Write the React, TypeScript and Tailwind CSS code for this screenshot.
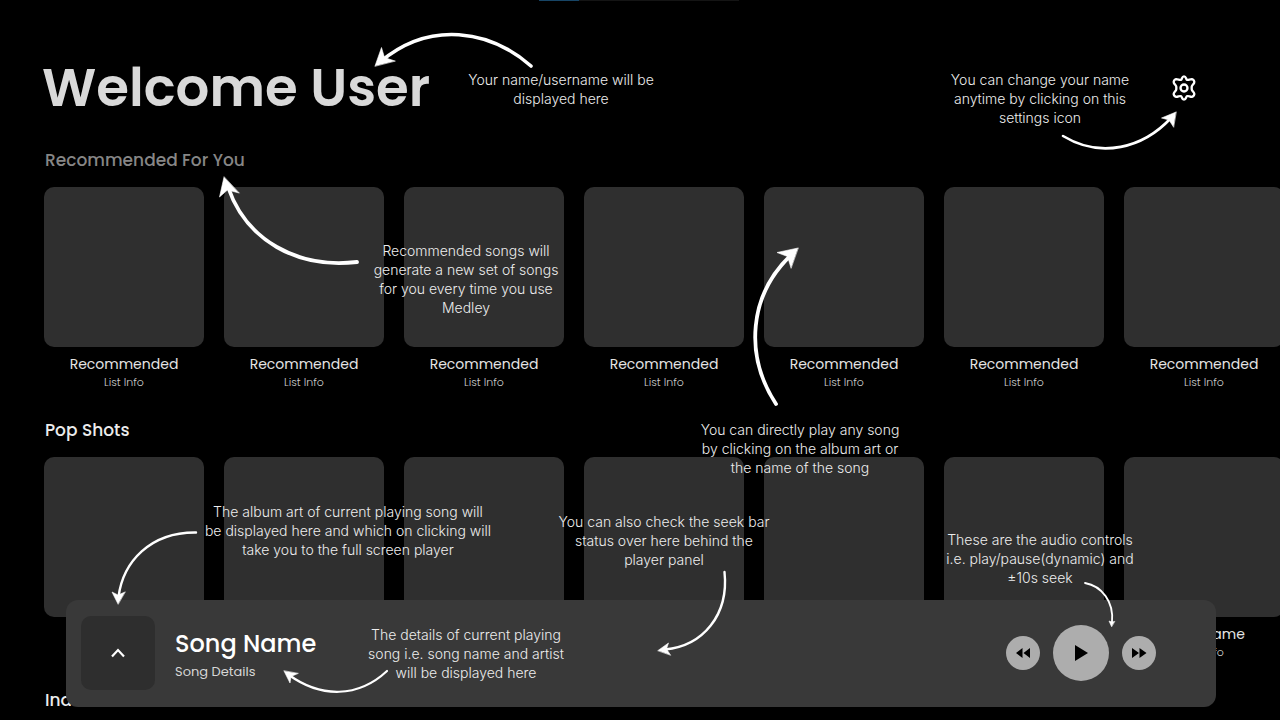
const cardSlots = [0, 1, 2, 3, 4, 5, 6];

type ShelfProps = { heading: string; muted?: boolean; title?: string };

function Shelf({ heading, muted, title }: ShelfProps) {
  return (
    <section className="flex h-[270px] flex-col">
      <h2 className={muted ? 'pl-px text-[17px] leading-7 font-medium text-[#868686]' : 'pl-px text-[17px] leading-7 font-medium text-[#ececec]'}>
        {heading}
      </h2>
      {title && (
        <ul className="mt-[13px] flex gap-5">
          {cardSlots.map((slot) => (
            <li key={slot} className="w-40 shrink-0 text-center">
              <button type="button" aria-label={title} className="block size-40 rounded-[10px] bg-[#2f2f2f]" />
              <p className="mt-[6px] text-[14px] leading-[22px] text-[#e4e4e4]">{title}</p>
              <p className="text-[11px] leading-[14px] font-light text-[#cccccc]">List Info</p>
            </li>
          ))}
        </ul>
      )}
    </section>
  );
}

const noteBase = 'absolute text-center font-[Inter,sans-serif] text-[14px] leading-[19px] font-light whitespace-nowrap text-[#ededed]';

type Note = { place: string; lines: string[] };

const notes: Note[] = [
  { place: 'left-[461px] top-[70px] w-[200px]', lines: ['Your name/username will be', 'displayed here'] },
  { place: 'left-[940px] top-[70px] w-[200px]', lines: ['You can change your name', 'anytime by clicking on this', 'settings icon'] },
  { place: 'left-[366px] top-[241px] w-[200px]', lines: ['Recommended songs will', 'generate a new set of songs', 'for you every time you use', 'Medley'] },
  { place: 'left-[695px] top-[420px] w-[210px]', lines: ['You can directly play any song', 'by clicking on the album art or', 'the name of the song'] },
  { place: 'left-[203px] top-[502px] w-[290px]', lines: ['The album art of current playing song will', 'be displayed here and which on clicking will', 'take you to the full screen player'] },
  { place: 'left-[554px] top-[512px] w-[220px]', lines: ['You can also check the seek bar', 'status over here behind the', 'player panel'] },
  { place: 'left-[940px] top-[530px] w-[200px]', lines: ['These are the audio controls', 'i.e. play/pause(dynamic) and', '±10s seek'] },
  { place: 'left-[366px] top-[625px] w-[200px]', lines: ['The details of current playing', 'song i.e. song name and artist', 'will be displayed here'] },
];

type Arrow = { curve: string; head: string; width: number };

const arrows: Arrow[] = [
  { curve: 'M531 66C490 30 430 20 380 62', head: 'M375 66L381.500 47.500L384.500 57.500L395 61Z', width: 3.6 },
  { curve: 'M1063 136C1101 159 1143 148 1171 118', head: 'M1176 112L1161.500 118L1169 120L1173.500 127Z', width: 2.6 },
  { curve: 'M357 262C297 269 246 240 228 187', head: 'M224 177L219.500 197L227.500 190L239 193Z', width: 3.8 },
  { curve: 'M776 404C744 355 749 295 791 255', head: 'M798 248L777 252.500L787.500 256.500L791 268Z', width: 3.8 },
  { curve: 'M196 532.500C150 532 123 562 118.500 597', head: 'M118 604L112 592L118 595L125 592Z', width: 2.4 },
  { curve: 'M724.500 572C729 615 703 646 665 649.500', head: 'M658 650.500L668.500 643L666.500 649L670.500 655Z', width: 2.4 },
  { curve: 'M1085 583C1102 586 1114 602 1112 622', head: 'M1111.500 626.500L1109 621L1112 622L1114.500 621.500Z', width: 1.8 },
  { curve: 'M387 671C358 698 321 698 289 675', head: 'M284 671L290 683L291 676.500L298 673.500Z', width: 2.2 },
];

function Walkthrough() {
  return (
    <div className="pointer-events-none absolute inset-0 z-20">
      <svg className="absolute top-0 left-0" width="1280" height="720" viewBox="0 0 1280 720" fill="none" aria-hidden="true">
        {arrows.map((arrow) => (
          <g key={arrow.curve} stroke="#fff" strokeLinecap="round">
            <path d={arrow.curve} strokeWidth={arrow.width} />
            <path d={arrow.head} fill="#fff" strokeWidth="0.6" strokeLinejoin="miter" />
          </g>
        ))}
      </svg>
      {notes.map((note) => (
        <p key={note.place} className={`${noteBase} ${note.place}`}>
          {note.lines.map((line) => (
            <span key={line} className="block">{line}</span>
          ))}
        </p>
      ))}
    </div>
  );
}

function SettingsIcon() {
  return (
    <svg viewBox="0 0 24 24" className="size-7" fill="none" stroke="currentColor" strokeWidth="2" strokeLinejoin="round" aria-hidden="true">
      <path d="M9.500 5C10.300 4.400 10.200 2 12 2s1.700 2.400 2.500 3 3-.8 4.300-.6c1.500.4 2.400 2 1.900 3.200-.4 1.200-2.100 2.100-2.100 3.400v2c0 1.300 1.700 2.200 2.100 3.400.5 1.200-.4 2.800-1.900 3.200-1.300.2-3.500-1.200-4.300-.6S13.800 22 12 22s-1.700-2.400-2.500-3-3 .8-4.300.6c-1.500-.4-2.400-2-1.900-3.200.4-1.200 2.100-2.100 2.100-3.400v-2c0-1.300-1.700-2.200-2.100-3.400-.5-1.200.4-2.800 1.900-3.200C6.500 4.200 8.700 5.600 9.500 5Z" />
      <circle cx="12" cy="12" r="3" />
    </svg>
  );
}

function Player() {
  return (
    <footer className="absolute right-16 bottom-[13px] left-[66px] z-10 flex h-[107px] items-center rounded-xl bg-[#393939] pr-[60px] pb-px pl-[15px]">
      <button type="button" aria-label="Open full screen player" className="grid size-[74px] shrink-0 place-items-center rounded-[10px] bg-[#2e2e2e] text-white">
        <svg viewBox="0 0 14 10" className="h-[10px] w-[14px]" fill="none" stroke="currentColor" strokeWidth="2.200" aria-hidden="true">
          <path d="M1 8.500L7 2L13 8.500" />
        </svg>
      </button>
      <div className="ml-5 flex-1 pt-[6px]">
        <p className="text-[24px] leading-8 font-medium text-white">Song Name</p>
        <p className="text-[13px] leading-6 text-[#d6d6d6]">Song Details</p>
      </div>
      <div className="flex items-center gap-[13px] text-black">
        <button type="button" aria-label="Back 10 seconds" className="grid size-[34px] place-items-center rounded-full bg-[#adadad]">
          <svg viewBox="0 0 16 12" className="h-3 w-4" fill="currentColor" aria-hidden="true">
            <path d="M7.500 1V11L1 6ZM15 1V11L8.500 6Z" />
          </svg>
        </button>
        <button type="button" aria-label="Play" className="grid size-14 place-items-center rounded-full bg-[#adadad]">
          <svg viewBox="0 0 14 16" className="h-4 w-[14px]" fill="currentColor" aria-hidden="true">
            <path d="M1 0L14 8L1 16Z" />
          </svg>
        </button>
        <button type="button" aria-label="Forward 10 seconds" className="grid size-[34px] place-items-center rounded-full bg-[#adadad]">
          <svg viewBox="0 0 16 12" className="h-3 w-4" fill="currentColor" aria-hidden="true">
            <path d="M1 1V11L8 6ZM8.500 1V11L15.500 6Z" />
          </svg>
        </button>
      </div>
    </footer>
  );
}

export default function App() {
  return (
    <div className="relative h-screen min-h-[720px] overflow-hidden bg-black font-[Poppins,Inter,sans-serif]">
      <div className="absolute top-0 left-1/2 flex h-px w-[200px] -translate-x-[101px] bg-[#141414]">
        <div className="w-10 bg-[#174566]" />
      </div>
      <main className="pt-14">
        <header className="flex h-16 items-center justify-between pr-[82px] pl-[42px]">
          <h1 className="text-[53px] leading-16 font-semibold text-[#d9d9d9]">Welcome User</h1>
          <button type="button" aria-label="Settings" className="text-white">
            <SettingsIcon />
          </button>
        </header>
        <div className="mt-[26px] pl-11">
          <Shelf heading="Recommended For You" muted title="Recommended" />
          <Shelf heading="Pop Shots" title="Song Name" />
          <Shelf heading="Indie" />
        </div>
      </main>
      <Player />
      <Walkthrough />
    </div>
  );
}
